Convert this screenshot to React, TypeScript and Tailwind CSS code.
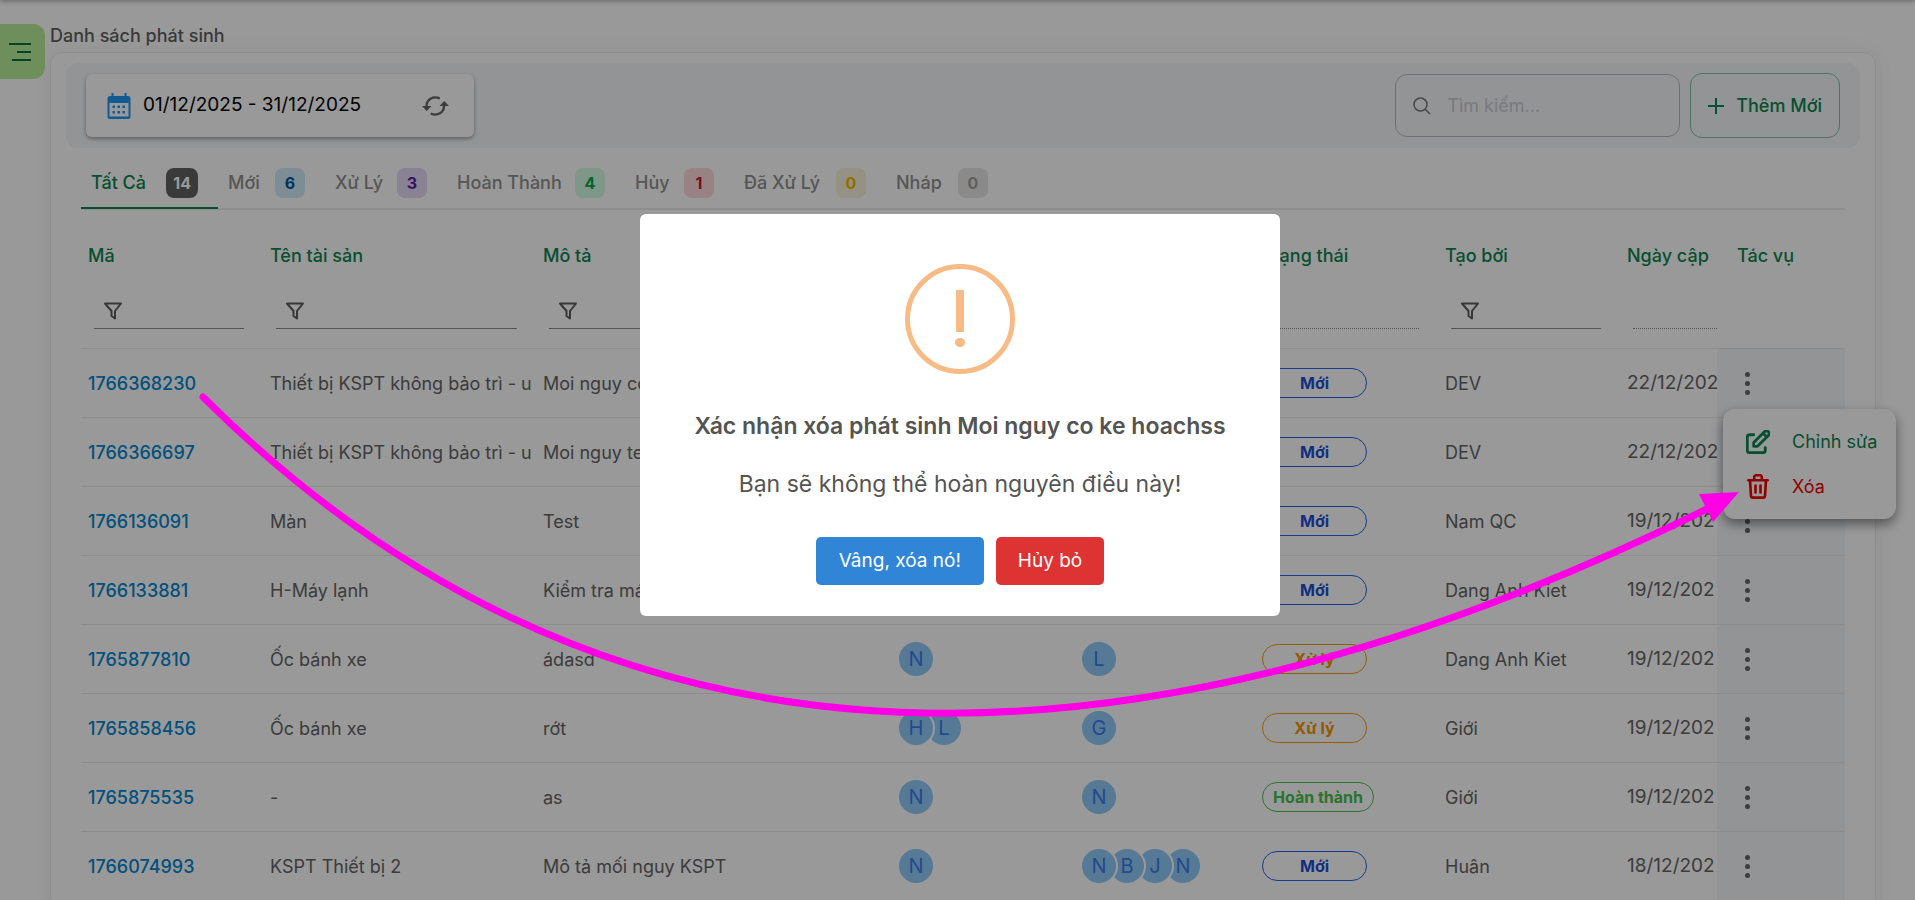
import React from 'react';

interface Row {
  code: string;
  asset: string;
  description: string;
  handlers: string[];
  approvers: string[];
  status: 'new' | 'processing' | 'done';
  createdBy: string;
  updatedAt: string;
}

const tabs = [
  { label: 'Tất Cả', count: 14, width: 'w-[137px]', badge: 'bg-[#616161] text-white' },
  { label: 'Mới', count: 6, width: 'w-[107px]', badge: 'bg-[#d0ebfa] text-[#04539b]' },
  { label: 'Xử Lý', count: 3, width: 'w-[122px]', badge: 'bg-[#e5d9f5] text-[#5127a8]' },
  { label: 'Hoàn Thành', count: 4, width: 'w-[178px]', badge: 'bg-[#d2fce4] text-[#00a843]' },
  { label: 'Hủy', count: 1, width: 'w-[109px]', badge: 'bg-[#ffd9dc] text-[#b72136]' },
  { label: 'Đã Xử Lý', count: 0, width: 'w-[152px]', badge: 'bg-[#f8f2dc] text-[#f5b400]' },
  { label: 'Nháp', count: 0, width: 'w-[122px]', badge: 'bg-[#e6e6e6] text-[#9e9e9e]' },
];

const columns = [
  { label: 'Mã', width: 'w-[182px]', filter: 'text' },
  { label: 'Tên tài sản', width: 'w-[273px]', filter: 'text' },
  { label: 'Mô tả', width: 'w-[354px]', filter: 'text' },
  { label: 'Người xử lý', width: 'w-[183px]', filter: 'none' },
  { label: 'Người duyệt', width: 'w-[182px]', filter: 'none' },
  { label: 'Trạng thái', width: 'w-[183px]', filter: 'disabled' },
  { label: 'Tạo bởi', width: 'w-[182px]', filter: 'text' },
];

const rows: Row[] = [
  { code: '1766368230', asset: 'Thiết bị KSPT không bảo trì - u', description: 'Moi nguy co ke hoachss', handlers: ['N'], approvers: ['L'], status: 'new', createdBy: 'DEV', updatedAt: '22/12/202' },
  { code: '1766366697', asset: 'Thiết bị KSPT không bảo trì - u', description: 'Moi nguy test', handlers: ['N'], approvers: ['L'], status: 'new', createdBy: 'DEV', updatedAt: '22/12/202' },
  { code: '1766136091', asset: 'Màn', description: 'Test', handlers: ['N'], approvers: ['N'], status: 'new', createdBy: 'Nam QC', updatedAt: '19/12/202' },
  { code: '1766133881', asset: 'H-Máy lạnh', description: 'Kiểm tra máy', handlers: ['N'], approvers: ['L'], status: 'new', createdBy: 'Dang Anh Kiet', updatedAt: '19/12/202' },
  { code: '1765877810', asset: 'Ốc bánh xe', description: 'ádasd', handlers: ['N'], approvers: ['L'], status: 'processing', createdBy: 'Dang Anh Kiet', updatedAt: '19/12/202' },
  { code: '1765858456', asset: 'Ốc bánh xe', description: 'rớt', handlers: ['H', 'L'], approvers: ['G'], status: 'processing', createdBy: 'Giới', updatedAt: '19/12/202' },
  { code: '1765875535', asset: '-', description: 'as', handlers: ['N'], approvers: ['N'], status: 'done', createdBy: 'Giới', updatedAt: '19/12/202' },
  { code: '1766074993', asset: 'KSPT Thiết bị 2', description: 'Mô tả mối nguy KSPT', handlers: ['N'], approvers: ['N', 'B', 'J', 'N'], status: 'new', createdBy: 'Huân', updatedAt: '18/12/202' },
];

const statuses = {
  new: { label: 'Mới', className: 'border-[#2563eb] text-[#1d4fd8]' },
  processing: { label: 'Xử lý', className: 'border-[#f59e0b] text-[#f59300]' },
  done: { label: 'Hoàn thành', className: 'border-[#45c04b] text-[#45c04b]' },
};

const FilterIcon = () => (
  <svg viewBox="0 0 18 18" className="w-[18px] h-[18px] shrink-0 text-[#5c5c5c]" fill="none" stroke="currentColor" strokeWidth="2" strokeLinejoin="round">
    <path d="M1 1.500h16L11 9V16.500L7.500 14V9z" />
  </svg>
);

const CalendarIcon = () => (
  <svg viewBox="0 0 24 26" className="w-6 h-[26px] shrink-0 text-[#2196f3]" fill="currentColor">
    <path d="M4.500 0h2v3h11V0h2v3h1.500a2.500 2.500 0 0 1 2.500 2.500v18a2.500 2.500 0 0 1-2.500 2.500H3a2.500 2.500 0 0 1-2.500-2.500v-18A2.500 2.500 0 0 1 3 3h1.500zM2.500 10v13.500h19V10z" fillRule="evenodd" />
    <path d="M5.500 12.500H8V15H5.500zm5 0H13V15h-2.500zm5 0H18V15h-2.500zM5.500 18H8v2.500H5.500zm5 0H13v2.500h-2.500zm5 0H18v2.500h-2.500z" />
  </svg>
);

const RefreshIcon = () => (
  <svg viewBox="0 0 27 20" className="w-[27px] h-5" fill="none" stroke="currentColor" strokeWidth="2.400">
    <path d="M4.500 10C4.500 3.500 11 -.5 17.800 2.300M22 10C22 16.500 15.500 20.500 8.800 17.700" />
    <path d="M0 10h9.500l-4.800 5zM17.500 10H27l-4.800-5z" fill="currentColor" stroke="none" />
  </svg>
);

const EditIcon = () => (
  <svg viewBox="3 2.300 18.700 18.700" className="w-6 h-6" fill="none" stroke="currentColor" strokeWidth="2.200" strokeLinecap="round" strokeLinejoin="round">
    <path d="M9 6H6a2 2 0 0 0-2 2v10a2 2 0 0 0 2 2h10a2 2 0 0 0 2-2v-2" />
    <path d="M20.400 6.600a2.100 2.100 0 0 0-3-3L9 12v3h3zM16.500 5l2.500 2.500" />
  </svg>
);

const TrashIcon = () => (
  <svg viewBox="0 0 22 25" className="w-[22px] h-[25px] mx-px" fill="none" stroke="currentColor" strokeWidth="2.600" strokeLinejoin="round" strokeLinecap="round">
    <path d="M1.300 6.200h19.400M3 6.200l1 15.700a1.800 1.800 0 0 0 1.800 1.700h10.400a1.800 1.800 0 0 0 1.800-1.700l1-15.700M7.200 6V3a1.700 1.700 0 0 1 1.700-1.700h4.200A1.700 1.700 0 0 1 14.800 3v3M8.500 11.500v7M13.500 11.500v7" />
  </svg>
);

const Avatars: React.FC<{ names: string[] }> = ({ names }) => (
  <div className="flex isolate">
    {names.map((name, i) => (
      <span
        key={i}
        className="relative flex items-center justify-center w-[38px] h-[38px] rounded-full border-2 border-white bg-[#90caf9] text-[#3d7bea] text-xl not-first:-ml-[10px]"
        style={{ zIndex: names.length - i }}
      >
        {name}
      </span>
    ))}
  </div>
);

const Toolbar = () => (
  <div className="flex items-center justify-between h-[85px] mx-[15px] mt-[10px] px-5 rounded-xl bg-[#f5f7fa]">
    <div className="flex items-center w-[388px] h-[63px] px-[21px] rounded-md bg-white shadow-[0_2px_4px_rgba(0,0,0,0.35)]">
      <CalendarIcon />
      <span className="ml-3 text-[19px] text-black">01/12/2025 - 31/12/2025</span>
      <button className="ml-auto mr-1 text-[#666]" aria-label="Làm mới">
        <RefreshIcon />
      </button>
    </div>
    <div className="flex items-center gap-[10px]">
      <label className="flex items-center gap-4 w-[285px] h-[63px] px-[17px] rounded-xl border border-[#b8bbc0]">
        <svg viewBox="0 0 18 18" className="w-[18px] h-[18px] shrink-0 text-[#777]" fill="none" stroke="currentColor" strokeWidth="1.500">
          <circle cx="7.500" cy="7.500" r="6.500" />
          <path d="M12 12l5 5" />
        </svg>
        <input type="text" placeholder="Tìm kiếm..." aria-label="Tìm kiếm" className="w-full bg-transparent outline-none placeholder:text-[#c8cbd0]" />
      </label>
      <button className="flex items-center gap-3 h-[65px] px-[17px] rounded-xl border border-[#7fc4a2] text-[#0a8450] font-medium">
        <svg viewBox="0 0 16 16" className="w-4 h-4" stroke="currentColor" strokeWidth="2">
          <path d="M8 0v16M0 8h16" />
        </svg>
        Thêm Mới
      </button>
    </div>
  </div>
);

const Tabs = () => (
  <div role="tablist" className="flex h-[62px] mx-[30px] border-b-2 border-[#ececec]">
    {tabs.map((tab, i) => (
      <button
        key={tab.label}
        role="tab"
        aria-selected={i === 0}
        className={`flex items-center justify-between h-[61px] ${tab.width} pl-[10px] pr-5 pt-[10px] border-b-2 font-medium whitespace-nowrap ${i === 0 ? 'border-[#0a8450] text-[#0a8450]' : 'border-transparent text-[#8f8f8f]'}`}
      >
        {tab.label}
        <span className={`flex items-center justify-center min-w-[30px] h-[30px] px-[7px] rounded-lg text-base font-bold ${tab.badge}`}>{tab.count}</span>
      </button>
    ))}
  </div>
);

const AssetTable = () => (
  <div className="mx-[30px] overflow-hidden">
    <table className="table-fixed w-full border-separate border-spacing-0 text-left">
      <thead>
        <tr className="h-[139px] align-top">
          {columns.map((col) => (
            <th key={col.label} className={`${col.width} pl-[7px] pr-[13px] pt-8 border-b border-[#e9e9e9] font-medium text-[#0a8450]`}>
              <div className="leading-7 whitespace-nowrap">{col.label}</div>
              {col.filter !== 'none' && (
                <label className={`flex items-center h-[35px] mt-6 mx-[6px] pl-[10px] border-b border-[#8a8a8a] ${col.filter === 'disabled' ? 'border-dotted' : ''}`}>
                  {col.filter === 'text' && <FilterIcon />}
                  <input type="text" aria-label={`Lọc ${col.label}`} disabled={col.filter === 'disabled'} className="w-full outline-none" />
                </label>
              )}
            </th>
          ))}
          <th className="pl-[7px] pt-8 border-b border-[#e9e9e9] font-medium text-[#0a8450]">
            <div className="leading-7 whitespace-nowrap">Ngày cập</div>
            <label className="flex h-[35px] mt-6 ml-[6px] border-b border-dotted border-[#8a8a8a]">
              <input type="text" aria-label="Lọc Ngày cập" disabled className="w-full outline-none" />
            </label>
          </th>
          <th className="w-[128px] pl-5 pt-8 border-b border-[#e9e9e9] font-medium text-[#0a8450] leading-7">Tác vụ</th>
        </tr>
      </thead>
      <tbody className="[&_td]:border-b [&_td]:border-[#e9e9e9]">
        {rows.map((row) => (
          <tr key={row.code} className="h-[69px] text-[#646464]">
            <td className="pl-[7px]">
              <a href="#" className="font-medium text-[#0288d1]">{row.code}</a>
            </td>
            <td className="pl-[7px] whitespace-nowrap">{row.asset}</td>
            <td className="pl-[7px] whitespace-nowrap">{row.description}</td>
            <td className="pl-[7px]"><Avatars names={row.handlers} /></td>
            <td className="pl-[7px]"><Avatars names={row.approvers} /></td>
            <td className="pl-[7px]">
              <span className={`inline-flex items-center justify-center min-w-[105px] h-[30px] px-[10px] rounded-full border text-base font-bold align-middle ${statuses[row.status].className}`}>
                {statuses[row.status].label}
              </span>
            </td>
            <td className="pl-[7px] whitespace-nowrap">{row.createdBy}</td>
            <td className="pl-[7px] text-[19px] whitespace-nowrap">{row.updatedAt}</td>
            <td className="pl-7 bg-[#f5f7fa]">
              <button className="flex flex-col gap-1 text-[#666]" aria-label="Tác vụ">
                <i className="w-[5px] h-[5px] rounded-full bg-current" />
                <i className="w-[5px] h-[5px] rounded-full bg-current" />
                <i className="w-[5px] h-[5px] rounded-full bg-current" />
              </button>
            </td>
          </tr>
        ))}
      </tbody>
    </table>
  </div>
);

const RowMenu = () => (
  <div role="menu" className="absolute right-[19px] top-[409px] z-20 w-[173px] h-[110px] px-[23px] py-[10px] rounded-xl bg-white shadow-[0_5px_12px_rgba(0,0,0,0.45)]">
    <button role="menuitem" className="flex items-center gap-[22px] h-[45px] text-[#0a8450]">
      <EditIcon />
      <span className="whitespace-nowrap">Chỉnh sửa</span>
    </button>
    <button role="menuitem" className="flex items-center gap-[22px] h-[45px] text-[#f00000]">
      <TrashIcon />
      Xóa
    </button>
  </div>
);

const ConfirmDialog = () => (
  <div className="fixed inset-0 z-30 flex items-start justify-center pl-[5px] pt-[214px] bg-black/40">
    <div role="dialog" aria-modal="true" aria-labelledby="confirm-title" className="flex flex-col items-center w-[640px] h-[402px] pt-[50px] rounded-md bg-white text-[#545454]">
      <div className="flex flex-col items-center w-[110px] h-[110px] pt-[21px] gap-[6px] rounded-full border-[5px] border-[#f8bb86]">
        <span className="w-2 h-[42px] bg-[#f8bb86]" />
        <span className="w-[10px] h-[9px] rounded-full bg-[#f8bb86]" />
      </div>
      <h2 id="confirm-title" className="mt-8 text-[23px] leading-10 font-semibold">Xác nhận xóa phát sinh Moi nguy co ke hoachss</h2>
      <p className="mt-5 text-[23px] leading-9">Bạn sẽ không thể hoàn nguyên điều này!</p>
      <div className="flex gap-3 mt-[35px] text-[19px] text-white">
        <button className="h-12 px-[23px] rounded-[5px] bg-[#3085d6]">Vâng, xóa nó!</button>
        <button className="h-12 px-[22px] rounded-[5px] bg-[#dd3333]">Hủy bỏ</button>
      </div>
    </div>
  </div>
);

const GuideArrow = () => (
  <svg className="fixed inset-0 z-40 w-full h-full pointer-events-none" fill="none">
    <path d="M203 397Q776 968 1709 508" stroke="#ff00e6" strokeWidth="7" strokeLinecap="round" />
    <path d="M1739 492L1699 494L1713 522z" fill="#ff00e6" />
  </svg>
);

export default function App() {
  return (
    <div className="relative h-screen overflow-hidden bg-white font-['Inter','Noto_Sans',sans-serif] text-[18px]">
      <div className="absolute inset-x-0 -top-1 h-1 shadow-[0_1px_5px_rgba(0,0,0,0.4)]" />
      <button className="absolute left-0 top-6 flex items-center justify-end w-[45px] h-[55px] pr-[14px] rounded-r-xl bg-[#b7ee9a] text-[#0a7045]" aria-label="Mở menu">
        <svg viewBox="0 0 22 18" className="w-[22px] h-[18px]" stroke="currentColor" strokeWidth="2">
          <path d="M0 1h22M8 9h14M3 17h19" />
        </svg>
      </button>
      <main className="pl-[50px] pr-[39px] pt-5">
        <h1 className="h-8 leading-8 text-[#5f5f5f] font-medium">Danh sách phát sinh</h1>
        <section className="min-h-screen rounded-xl border border-[#ececec] shadow-[0_0_20px_rgba(0,0,0,0.06)]">
          <Toolbar />
          <Tabs />
          <AssetTable />
        </section>
      </main>
      <RowMenu />
      <ConfirmDialog />
      <GuideArrow />
    </div>
  );
}
